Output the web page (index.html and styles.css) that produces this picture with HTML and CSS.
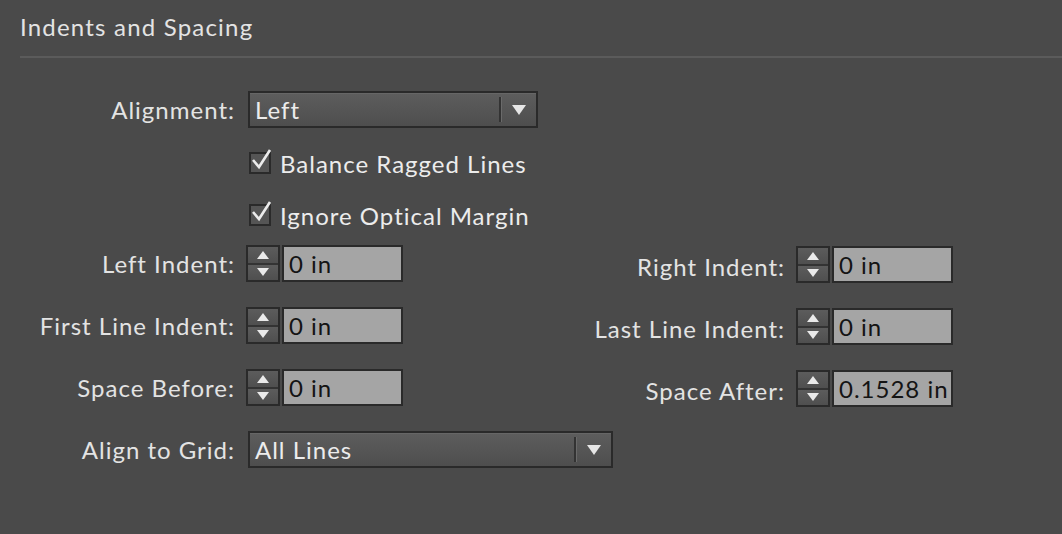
FILE: index.html
```html
<!DOCTYPE html>
<html lang="en">
<head>
    <meta charset="UTF-8">
    <title>Indents and Spacing</title>
    <link rel="stylesheet" href="styles.css">
</head>
<body>
    <div class="panel">
        <h1 class="panel-title">Indents and Spacing</h1>

        <div class="form">
            <div class="row">
                <label class="label">Alignment:</label>
                <div class="dropdown dropdown-short">
                    <span class="dropdown-value">Left</span>
                    <span class="dropdown-sep"></span>
                    <span class="dropdown-arrow"></span>
                </div>
            </div>

            <div class="check-row">
                <span class="checkbox">
                    <svg viewBox="0 0 24 26" width="24" height="26"><path d="M4 13 L10 20 L21 3" fill="none" stroke="#ececec" stroke-width="2.6" stroke-linejoin="miter"/></svg>
                </span>
                <span class="check-label">Balance Ragged Lines</span>
            </div>

            <div class="check-row">
                <span class="checkbox">
                    <svg viewBox="0 0 24 26" width="24" height="26"><path d="M4 13 L10 20 L21 3" fill="none" stroke="#ececec" stroke-width="2.6" stroke-linejoin="miter"/></svg>
                </span>
                <span class="check-label">Ignore Optical Margin</span>
            </div>

            <div class="row pair-row first-pair">
                <label class="label">Left Indent:</label>
                <div class="field">
                    <div class="spinner"><span class="spin-up"></span><span class="spin-down"></span></div>
                    <div class="input">0 in</div>
                </div>
                <label class="label label-right">Right Indent:</label>
                <div class="field field-right">
                    <div class="spinner"><span class="spin-up"></span><span class="spin-down"></span></div>
                    <div class="input">0 in</div>
                </div>
            </div>

            <div class="row pair-row">
                <label class="label">First Line Indent:</label>
                <div class="field">
                    <div class="spinner"><span class="spin-up"></span><span class="spin-down"></span></div>
                    <div class="input">0 in</div>
                </div>
                <label class="label label-right">Last Line Indent:</label>
                <div class="field field-right">
                    <div class="spinner"><span class="spin-up"></span><span class="spin-down"></span></div>
                    <div class="input">0 in</div>
                </div>
            </div>

            <div class="row pair-row">
                <label class="label">Space Before:</label>
                <div class="field">
                    <div class="spinner"><span class="spin-up"></span><span class="spin-down"></span></div>
                    <div class="input">0 in</div>
                </div>
                <label class="label label-right">Space After:</label>
                <div class="field field-right">
                    <div class="spinner"><span class="spin-up"></span><span class="spin-down"></span></div>
                    <div class="input">0.1528 in</div>
                </div>
            </div>

            <div class="row grid-row">
                <label class="label">Align to Grid:</label>
                <div class="dropdown dropdown-long">
                    <span class="dropdown-value">All Lines</span>
                    <span class="dropdown-sep"></span>
                    <span class="dropdown-arrow"></span>
                </div>
            </div>
        </div>
    </div>
</body>
</html>
```

FILE: styles.css
```css
:root {
    --bg: #4a4a4a;
    --text: #e3e3e3;
    --border-dark: #2a2a2a;
    --input-bg: #a5a5a5;
}

body {
    margin: 0;
    background: var(--bg);
    font-family: Lato, 'Open Sans', sans-serif;
    font-size: 24px;
    letter-spacing: 1px;
    color: var(--text);
    height: 534px;
    overflow: hidden;
}

.panel {
    padding-top: 10px;
}

.panel-title {
    margin: 0 0 0 20px;
    font-size: 24px;
    font-weight: normal;
    letter-spacing: 1.2px;
    line-height: 34px;
    padding-bottom: 12px;
    border-bottom: 2px solid #5b5b5b;
}

.form {
    display: flex;
    flex-direction: column;
    padding-top: 33px;
}

.row {
    display: flex;
    align-items: center;
    height: 37px;
}

.label {
    width: 235px;
    text-align: right;
    margin-right: 11px;
    flex-shrink: 0;
    white-space: nowrap;
}

.label-right {
    width: 382px;
    padding-top: 6px;
}

.dropdown {
    display: flex;
    align-items: center;
    height: 37px;
    box-sizing: border-box;
    border: 2px solid var(--border-dark);
    background: linear-gradient(#5d5d5d, #4e4e4e);
    box-shadow: inset 0 1px 0 #666;
    margin-left: 2px;
}

.dropdown-short { width: 290px; }
.dropdown-long { width: 365px; }

.dropdown-value {
    flex: 1;
    padding-left: 5px;
    color: #ececec;
}

.dropdown-sep {
    width: 2px;
    height: 25px;
    background: #333;
    border-right: 1px solid #6a6a6a;
    margin-right: 10px;
}

.dropdown-arrow {
    width: 0;
    height: 0;
    border-left: 7px solid transparent;
    border-right: 7px solid transparent;
    border-top: 10px solid #e6e6e6;
    margin-right: 10px;
}

.check-row {
    display: flex;
    align-items: center;
    height: 26px;
    margin-left: 249px;
}

.check-row:nth-child(2) { margin-top: 22px; }
.check-row:nth-child(3) { margin-top: 26px; }

.checkbox {
    position: relative;
    width: 22px;
    height: 22px;
    box-sizing: border-box;
    border: 2px solid var(--border-dark);
    background: #555;
    margin-right: 9px;
}

.checkbox svg {
    position: absolute;
    left: -2px;
    top: -7px;
}

.check-label {
    color: #ececec;
}

.pair-row {
    margin-top: 25px;
}

.first-pair {
    margin-top: 17px;
}

.field {
    display: flex;
    height: 37px;
}

.field-right {
    margin-top: 2px;
}

.spinner {
    display: flex;
    flex-direction: column;
    width: 34px;
    height: 37px;
    box-sizing: border-box;
    border: 2px solid var(--border-dark);
    background: #555;
}

.spin-up, .spin-down {
    flex: 1;
    display: flex;
    align-items: center;
    justify-content: center;
    background: linear-gradient(#5c5c5c, #4f4f4f);
}

.spin-up {
    border-bottom: 2px solid #333;
}

.spin-up::after {
    content: "";
    border-left: 6px solid transparent;
    border-right: 6px solid transparent;
    border-bottom: 8px solid #eaeaea;
}

.spin-down::after {
    content: "";
    border-left: 6px solid transparent;
    border-right: 6px solid transparent;
    border-top: 8px solid #eaeaea;
}

.input {
    width: 121px;
    height: 37px;
    box-sizing: border-box;
    margin-left: 2px;
    border: 2px solid var(--border-dark);
    background: var(--input-bg);
    color: #141414;
    line-height: 33px;
    padding-left: 5px;
    white-space: nowrap;
    overflow: hidden;
}

.grid-row {
    margin-top: 25px;
}
```
